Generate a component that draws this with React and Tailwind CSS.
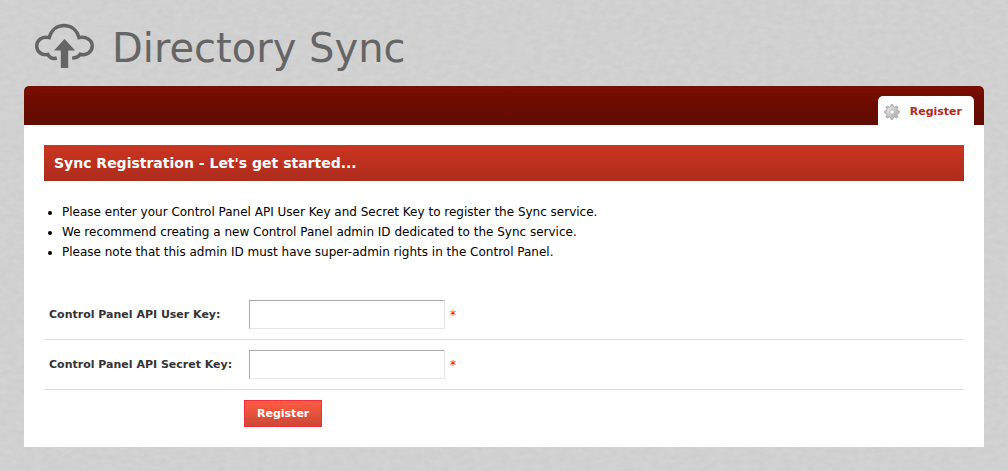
function PaperTexture() {
  return (
    <svg className="absolute inset-0 -z-10 h-full w-full" aria-hidden="true">
      <filter id="paper" x="0" y="0" width="100%" height="100%" colorInterpolationFilters="sRGB">
        <feTurbulence type="fractalNoise" baseFrequency="0.12 0.2" numOctaves="4" seed="8" />
        <feColorMatrix values="0.04 0 0 0 0.798  0.04 0 0 0 0.798  0.04 0 0 0 0.798  0 0 0 0 1" />
      </filter>
      <rect width="100%" height="100%" filter="url(#paper)" />
    </svg>
  );
}

function CloudIcon() {
  return (
    <svg className="h-12 w-16" viewBox="0 0 64 48" aria-hidden="true">
      <path
        d="M24.8 37C21 38.2 17.6 36.6 15.8 33.4C9.6 34.6 4.7 30.6 4.7 25C4.7 19 10.2 15 17.2 16.6C19.2 9 24.8 4.6 32 4.6C39.4 4.6 45 9 47 16.6C54 15.2 60.2 18.8 60.2 25C60.2 31 54.4 35 48.2 33.2C46.6 36 43.8 37.2 40.2 36.8"
        fill="none" stroke="#656565" strokeWidth="3.5"
      />
      <path d="M32.5 18L43.2 29.4H36.2V47H28.8V29.4H22Z" fill="#656565" />
    </svg>
  );
}

const TEETH = [0, 45, 90, 135, 180, 225, 270, 315];

function GearIcon() {
  return (
    <svg className="h-4 w-4" viewBox="0 0 16 16" aria-hidden="true">
      <defs>
        <linearGradient id="metal" x1="0" y1="0" x2="1" y2="1">
          <stop offset="0" stopColor="#e0e0e0" />
          <stop offset="1" stopColor="#b4b4b4" />
        </linearGradient>
      </defs>
      {TEETH.map((angle) => (
        <rect key={angle} x="6.5" y="0.3" width="3" height="4" rx="0.8" fill="#9c9c9c" transform={`rotate(${angle} 8 8)`} />
      ))}
      <circle cx="8" cy="8" r="4.1" fill="none" stroke="#a0a0a0" strokeWidth="3.8" />
      {TEETH.map((angle) => (
        <rect key={angle} x="7.3" y="1.2" width="1.4" height="3" fill="#cfcfcf" transform={`rotate(${angle} 8 8)`} />
      ))}
      <circle cx="8" cy="8" r="3.8" fill="none" stroke="url(#metal)" strokeWidth="3.2" />
      <circle cx="8" cy="8" r="2" fill="#fff" stroke="#a6a6a6" strokeWidth="0.6" />
    </svg>
  );
}

function KeyField({ id, label }) {
  return (
    <div className="flex items-center border-b border-[#ddd] py-[10px] pl-[5px]">
      <label htmlFor={id} className="w-[200px] pt-0.5 text-[11px] font-bold text-[#333]">
        {label}
      </label>
      <input
        id={id}
        type="text"
        required
        className="h-[29px] w-[196px] border border-t-[#aaa] border-r-[#e7e7e7] border-b-[#e7e7e7] border-l-[#aaa] bg-white px-2 text-[12px] outline-none"
      />
      <span className="pl-[5px] text-[12px] text-[#f00]">*</span>
    </div>
  );
}

export default function App() {
  return (
    <div className="relative isolate min-h-screen bg-[#d0d0d0] px-6 pb-6 font-['Verdana','DejaVu_Sans',sans-serif] text-black">
      <PaperTexture />
      <header className="flex h-[86px] items-center gap-4 pt-2 pl-2 pb-1">
        <CloudIcon />
        <h1 className="pt-1.5 text-[40px] leading-[48px] text-[#656565]">Directory Sync</h1>
      </header>
      <div>
        <nav className="flex h-[39px] justify-end rounded-t-[5px] bg-linear-to-b from-[#781000] via-[#6c0b00] to-[#600d00] pt-[10px] pr-[10px]">
          <a href="#register" className="flex items-center gap-[10px] rounded-t-[5px] bg-white pt-[3px] pr-3 pl-[6px] text-[11px] font-bold text-[#b02a1b]">
            <GearIcon />
            Register
          </a>
        </nav>
        <main className="bg-white p-5">
          <h2 className="bg-linear-to-b from-[#cb3521] to-[#ad2c1d] px-[10px] text-[14px] leading-[36px] font-bold text-white">
            Sync Registration - Let's get started...
          </h2>
          <ul className="mt-[21px] list-disc pl-[18px] text-[12px] leading-[20px]">
            <li>Please enter your Control Panel API User Key and Secret Key to register the Sync service.</li>
            <li>We recommend creating a new Control Panel admin ID dedicated to the Sync service.</li>
            <li>Please note that this admin ID must have super-admin rights in the Control Panel.</li>
          </ul>
          <form className="mt-7" onSubmit={(event) => event.preventDefault()}>
            <KeyField id="user-key" label="Control Panel API User Key:" />
            <KeyField id="secret-key" label="Control Panel API Secret Key:" />
            <button
              type="submit"
              className="mt-[10px] ml-[200px] block h-[27px] border border-[#f52c3b] bg-linear-to-b from-[#ff5c43] to-[#cb4935] px-3 pt-0.5 text-[11px] font-bold text-white"
            >
              Register
            </button>
          </form>
        </main>
      </div>
    </div>
  );
}
